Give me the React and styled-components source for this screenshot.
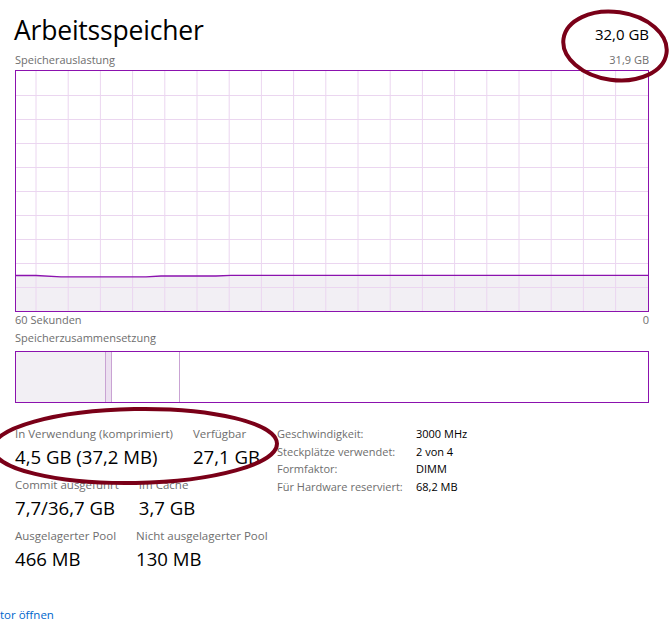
import React from "react";
import styled, { createGlobalStyle } from "styled-components";

const GlobalStyle = createGlobalStyle`
  html, body {
    margin: 0;
    padding: 0;
    background: #ffffff;
  }
  body {
    font-family: "Open Sans", "Noto Sans", "Liberation Sans", sans-serif;
    color: #000;
  }
`;

const PURPLE = "#8b12ae";
const GREY = "#6e6e6e";

const Page = styled.div`
  position: relative;
  width: 670px;
  height: 639px;
  overflow: hidden;
  box-sizing: border-box;
  padding: 0 21px 0 15px;
`;

const Header = styled.div`
  display: flex;
  justify-content: space-between;
  align-items: baseline;
  padding-top: 14px;
  height: 38px;
`;

const Title = styled.h1`
  margin: 0 0 0 -1px;
  font-size: 26.5px;
  font-weight: 400;
  line-height: 32px;
  letter-spacing: -0.2px;
`;

const Total = styled.div`
  font-size: 15px;
  line-height: 20px;
`;

const CaptionRow = styled.div`
  display: flex;
  justify-content: space-between;
  align-items: baseline;
  height: ${(p) => p.$h || 17}px;
`;

const Caption = styled.span`
  font-size: 11px;
  line-height: 16px;
  color: ${GREY};
`;

const Graph = styled.div`
  box-sizing: border-box;
  height: 242px;
  border: 1px solid ${PURPLE};
  margin-top: 1px;
  svg {
    display: block;
  }
`;

const CompositionBar = styled.div`
  box-sizing: border-box;
  display: flex;
  height: 52px;
  border: 1px solid ${PURPLE};
  margin-top: 1px;
`;

const Segment = styled.div`
  box-sizing: border-box;
  width: ${(p) => p.$w}px;
  background: ${(p) => p.$bg || "transparent"};
  border-right: ${(p) => (p.$line ? "1px solid #c9a3d3" : "none")};
  flex: ${(p) => (p.$grow ? 1 : "none")};
`;

const Stats = styled.div`
  display: flex;
  margin-top: 23px;
`;

const LeftStats = styled.div`
  width: 262px;
  display: flex;
  flex-direction: column;
  gap: 6px;
`;

const StatRow = styled.div`
  display: flex;
  gap: 20px;
`;

const Stat = styled.div`
  display: flex;
  flex-direction: column;
`;

const StatLabel = styled.span`
  font-size: 11.5px;
  line-height: 16px;
  color: ${GREY};
  white-space: nowrap;
`;

const StatValue = styled.span`
  font-size: 18.6px;
  line-height: 29px;
  white-space: nowrap;
`;

const Details = styled.div`
  display: grid;
  grid-template-columns: 139px auto;
  grid-auto-rows: 17.6px;
  align-content: start;
`;

const DetailLabel = styled.span`
  font-size: 11px;
  line-height: 16px;
  color: ${GREY};
  white-space: nowrap;
`;

const DetailValue = styled.span`
  font-size: 11px;
  line-height: 16px;
  color: #000;
  white-space: nowrap;
`;

const Link = styled.a`
  position: absolute;
  left: 0;
  top: 607px;
  font-size: 11.5px;
  line-height: 16px;
  color: #0066cc;
  text-decoration: none;
`;

const Overlay = styled.svg`
  position: absolute;
  left: 0;
  top: 0;
  pointer-events: none;
`;

const W = 632;
const H = 240;
const vLines = Array.from({ length: 19 }, (_, k) => 20 + 32.2 * k);
const hLines = Array.from({ length: 9 }, (_, k) => 24 * (k + 1));
const usage = [
  [0, 204.5],
  [20, 204.5],
  [45, 205.8],
  [130, 205.8],
  [145, 205],
  [200, 205],
  [215, 204.3],
  [W, 204.3],
];

function UsageChart() {
  const line = usage.map(([x, y]) => `${x},${y}`).join(" ");
  const area = `0,${H} ${line} ${W},${H}`;
  return (
    <svg width={W} height={H} viewBox={`0 0 ${W} ${H}`}>
      <polygon points={area} fill="#f2eff4" />
      {vLines.map((x) => (
        <line key={`v${x}`} x1={x} x2={x} y1={0} y2={H} stroke="#ebd6f0" strokeWidth="1" />
      ))}
      {hLines.map((y) => (
        <line key={`h${y}`} x1={0} x2={W} y1={y + 0.5} y2={y + 0.5} stroke="#ebd6f0" strokeWidth="1" />
      ))}
      <polyline points={line} fill="none" stroke={PURPLE} strokeWidth="1.3" />
    </svg>
  );
}

const stats = [
  [
    ["In Verwendung (komprimiert)", "4,5 GB (37,2 MB)"],
    ["Verfügbar", "27,1 GB"],
  ],
  [
    ["Commit ausgeführt", "7,7/36,7 GB"],
    ["Im Cache", "3,7 GB"],
  ],
  [
    ["Ausgelagerter Pool", "466 MB"],
    ["Nicht ausgelagerter Pool", "130 MB"],
  ],
];

const details = [
  ["Geschwindigkeit:", "3000 MHz"],
  ["Steckplätze verwendet:", "2 von 4"],
  ["Formfaktor:", "DIMM"],
  ["Für Hardware reserviert:", "68,2 MB"],
];

export default function App() {
  return (
    <>
      <GlobalStyle />
      <Page>
        <Header>
          <Title>Arbeitsspeicher</Title>
          <Total>32,0 GB</Total>
        </Header>
        <CaptionRow>
          <Caption>Speicherauslastung</Caption>
          <Caption>31,9 GB</Caption>
        </CaptionRow>
        <Graph>
          <UsageChart />
        </Graph>
        <CaptionRow $h={18}>
          <Caption>60 Sekunden</Caption>
          <Caption>0</Caption>
        </CaptionRow>
        <CaptionRow $h={20}>
          <Caption>Speicherzusammensetzung</Caption>
        </CaptionRow>
        <CompositionBar>
          <Segment $w={90} $bg="#f2eff4" $line />
          <Segment $w={6} $bg="#ece0f0" $line />
          <Segment $w={68} $line />
          <Segment $grow />
        </CompositionBar>
        <Stats>
          <LeftStats>
            {stats.map((row, i) => (
              <StatRow key={i}>
                {row.map(([label, value]) => (
                  <Stat key={label}>
                    <StatLabel>{label}</StatLabel>
                    <StatValue>{value}</StatValue>
                  </Stat>
                ))}
              </StatRow>
            ))}
          </LeftStats>
          <Details>
            {details.map(([label, value]) => (
              <React.Fragment key={label}>
                <DetailLabel>{label}</DetailLabel>
                <DetailValue>{value}</DetailValue>
              </React.Fragment>
            ))}
          </Details>
        </Stats>
        <Link href="#">tor öffnen</Link>
        <Overlay width="670" height="639" viewBox="0 0 670 639">
          <ellipse cx="615" cy="46" rx="52" ry="34" fill="none" stroke="#7a0018" strokeWidth="4" transform="rotate(8 615 46)" />
          <ellipse cx="135" cy="446" rx="142" ry="37" fill="none" stroke="#7a0018" strokeWidth="4" transform="rotate(-1 135 446)" />
        </Overlay>
      </Page>
    </>
  );
}
